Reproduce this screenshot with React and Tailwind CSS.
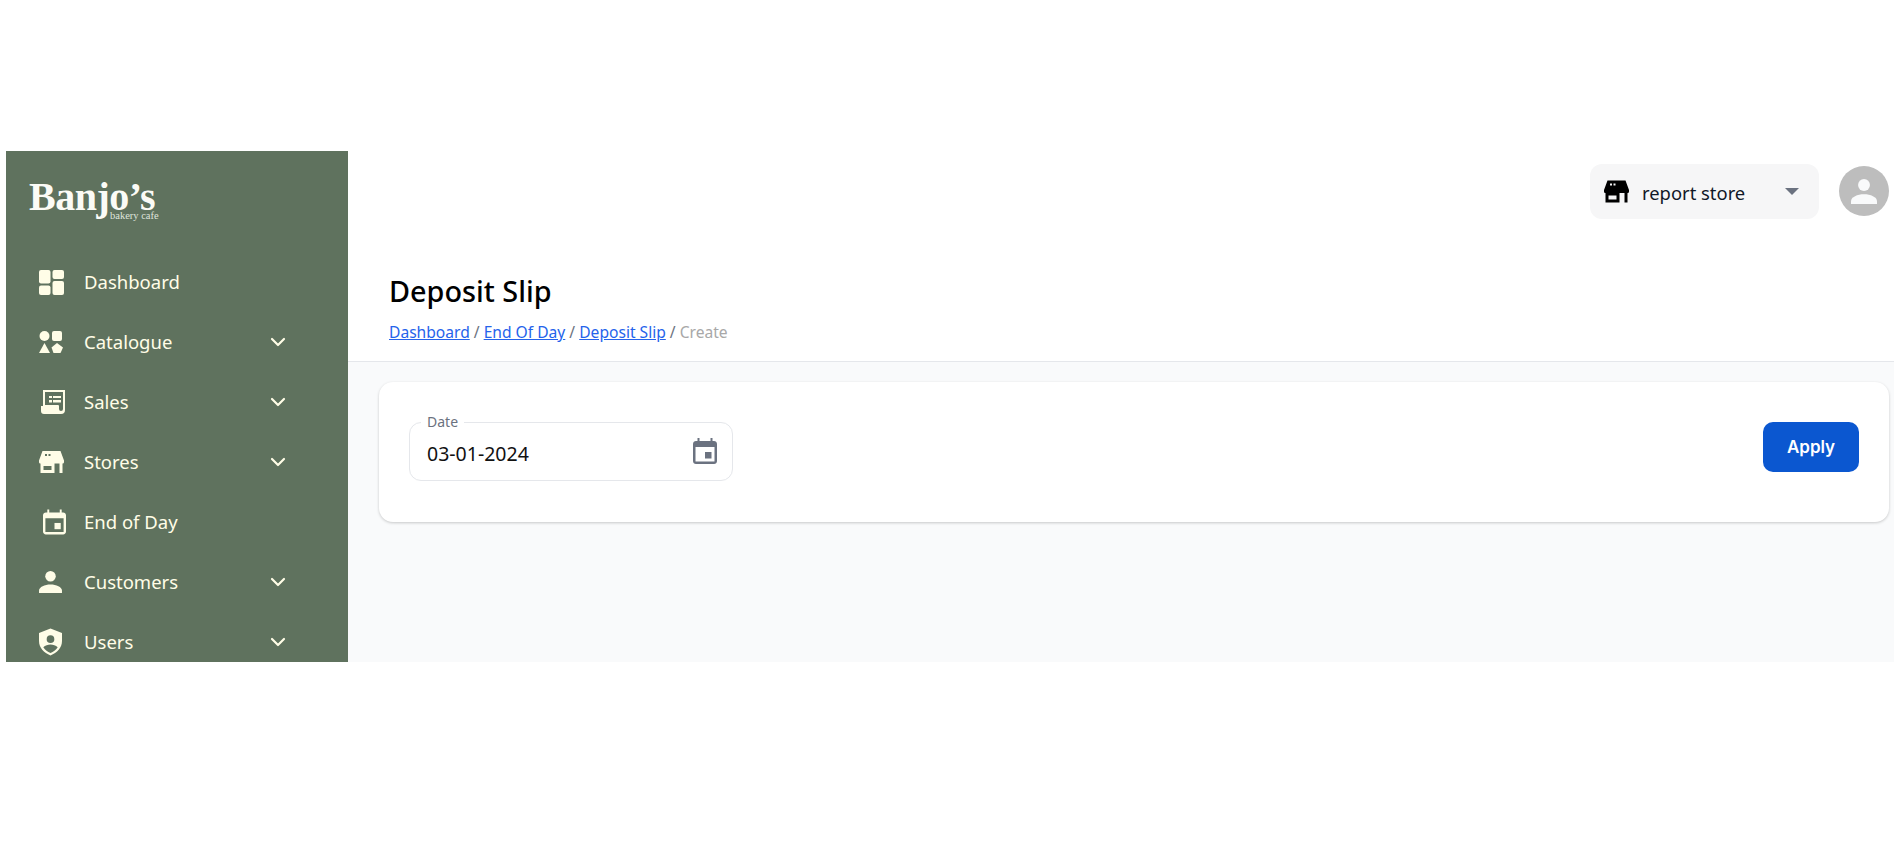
// App.jsx
import { ChevronDown } from "lucide-react";

const CREAM = "#fffde7";

const DashboardIcon = () => (
  <svg viewBox="0 0 25 25" className="w-[25px] h-[25px]" fill={CREAM}>
    <rect x="0" y="0" width="11.500" height="13.500" rx="2" />
    <rect x="13.500" y="0" width="11.500" height="9" rx="2" />
    <rect x="0" y="15.500" width="11.500" height="9.500" rx="2" />
    <rect x="13.500" y="11" width="11.500" height="14" rx="2" />
  </svg>
);

const CategoryIcon = () => (
  <svg viewBox="0 0 24 22" className="w-[24px] h-[22px]" fill={CREAM}>
    <circle cx="5.500" cy="5" r="5" />
    <rect x="13" y="0" width="10" height="10" rx="2" />
    <path d="M5.500 12 L11 22 H0 Z" />
    <path d="M18 12 L24 16.500 L21.500 22 H14.500 L12.500 16.500 Z" />
  </svg>
);

const ReceiptIcon = () => (
  <svg viewBox="0 0 24 24" className="w-[24px] h-[24px]" fill={CREAM}>
    <path
      fillRule="evenodd"
      d="M2 0H24V20a4 4 0 0 1-4 4H3a3 3 0 0 1-3-3V16H2ZM4 2V15H17a1 1 0 0 1 1 1V19a2 2 0 0 0 4 0V2Z"
    />
    <path d="M8 6h3v2H8zM12 6h8v2h-8zM8 10h3v2.500H8zM12 10h8v2.500h-8z" />
  </svg>
);

const StoreIcon = ({ color, className }) => (
  <svg viewBox="0 0 25 22" className={className} fill={color}>
    <path
      fillRule="evenodd"
      d="M3.500 0h18L25 9.500v1.500c0 1-.8 1.500-1.500 1.500V22h-3v-9.500h-5V22H1.500v-9.500C.8 12.500 0 12 0 11V9.500zM4.500 15v4h8v-4z M6 3h2v2H6z M9.500 3h2v2h-2z"
    />
  </svg>
);

const EventIcon = ({ color, className }) => (
  <svg viewBox="0 0 24 26" className={className} fill={color}>
    <path
      fillRule="evenodd"
      d="M4.500 0h2v3h11V0h2v3h1.500c1.700 0 3 1.300 3 3v17c0 1.700-1.300 3-3 3H3c-1.700 0-3-1.300-3-3V6c0-1.700 1.300-3 3-3h1.500zM2.500 9v14.500h19V9z"
    />
    <rect x="12" y="14" width="6.500" height="6.500" />
  </svg>
);

const PersonIcon = ({ color, className }) => (
  <svg viewBox="0 0 24 23" className={className} fill={color}>
    <circle cx="12" cy="5.500" r="5.500" />
    <path d="M0 23v-2.500C0 16.500 6 14 12 14s12 2.500 12 6.500V23z" />
  </svg>
);

const ShieldIcon = () => (
  <svg viewBox="0 0 24 28" className="w-[23px] h-[28px]" fill={CREAM}>
    <path
      fillRule="evenodd"
      d="M12 0 24 4.500V13c0 7-5 12.500-12 15C5 25.500 0 20 0 13V4.500zM12 7a4 4 0 1 0 0 8 4 4 0 0 0 0-8zM4.500 19.500c2 3 4.500 4.800 7.500 6 3-1.200 5.500-3 7.500-6-2-2-4.800-3-7.500-3s-5.500 1-7.500 3z"
    />
  </svg>
);

const navItems = [
  { label: "Dashboard", icon: <DashboardIcon /> },
  { label: "Catalogue", icon: <CategoryIcon />, children: true },
  { label: "Sales", icon: <span className="block ml-[2px]"><ReceiptIcon /></span>, children: true },
  { label: "Stores", icon: <StoreIcon color={CREAM} className="w-[25px] h-[22px]" />, children: true },
  {
    label: "End of Day",
    icon: <span className="block ml-[4px]"><EventIcon color={CREAM} className="w-[23px] h-[26px]" /></span>,
  },
  { label: "Customers", icon: <PersonIcon color={CREAM} className="w-[23px] h-[22px]" />, children: true },
  { label: "Users", icon: <ShieldIcon />, children: true },
];

function Sidebar() {
  return (
    <aside className="w-[342px] shrink-0 bg-[#5f725e] overflow-hidden">
      <div className="pl-[23px] pt-[23px] h-[101px] text-[#fbfbf6]">
        <div className="font-['Liberation_Serif',serif] font-bold text-[40px] leading-[46px] tracking-[-0.5px]">
          Banjo’s
        </div>
        <div className="font-['Liberation_Serif',serif] text-[10.500px] leading-[10px] ml-[81px] -mt-[9px] text-[#dfe4dc]">
          bakery cafe
        </div>
      </div>
      <nav>
        {navItems.map((item) => (
          <div key={item.label} className="flex items-center h-[60px] pl-[33px]">
            <span className="w-[25px] flex justify-start">{item.icon}</span>
            <span className="ml-[20px] text-[#fffde7] text-[18.500px] font-['Noto_Sans',sans-serif]">
              {item.label}
            </span>
            {item.children && (
              <ChevronDown className="ml-auto mr-[58px] w-[24px] h-[24px]" color={CREAM} strokeWidth={2.2} />
            )}
          </div>
        ))}
      </nav>
    </aside>
  );
}

function Header() {
  return (
    <div className="flex items-center justify-end h-[81px] pr-[5px]">
      <div className="flex items-center w-[229px] h-[55px] rounded-[12px] bg-[#f6f6f7] pl-[14px] pr-[20px]">
        <StoreIcon color="#000000" className="w-[25px] h-[23px]" />
        <span className="ml-[13px] mt-[3px] text-[18.400px] text-[#111827]">report store</span>
        <span className="ml-auto w-0 h-0 border-x-[7px] border-x-transparent border-t-[7px] border-t-[#6b7280]" />
      </div>
      <div className="ml-[20px] -mt-[1px] w-[50px] h-[50px] rounded-full bg-[#bdbdbd] flex items-center justify-center">
        <PersonIcon color="#f9fafb" className="w-[26px] h-[25px]" />
      </div>
    </div>
  );
}

export default function App() {
  return (
    <div className="h-[851px] bg-white pt-[151px] pl-[6px] font-['Noto_Sans',sans-serif]">
      <div className="flex h-[511px] overflow-hidden">
        <Sidebar />
        <main className="flex-1 flex flex-col bg-[#f9fafb]">
          <div className="bg-white border-b border-[#e5e7eb] h-[211px]">
            <Header />
            <div className="pl-[41px] pt-[39px]">
              <h1 className="text-[28.800px] leading-[40px] font-medium text-black">Deposit Slip</h1>
              <div className="mt-[10px] text-[15.600px] leading-[22px] text-[#6b7280]">
                <a className="text-[#2563eb] underline">Dashboard</a> /{" "}
                <a className="text-[#2563eb] underline">End Of Day</a> /{" "}
                <a className="text-[#2563eb] underline">Deposit Slip</a> /{" "}
                <span className="text-[#a8a8a8]">Create</span>
              </div>
            </div>
          </div>
          <div className="pt-[20px] pl-[31px] pr-[5px]">
            <div className="h-[140px] bg-white rounded-[14px] shadow-[0_1px_3px_rgba(0,0,0,0.2)] flex items-start justify-between pt-[40px] pl-[30px] pr-[30px]">
              <div className="relative w-[324px] h-[59px] border border-[#e5e7eb] rounded-[12px] flex items-center justify-between pl-[17px] pr-[15px]">
                <span className="absolute -top-[10px] left-[11px] bg-white px-[6px] text-[14px] leading-[18px] text-[#6b7280]">
                  Date
                </span>
                <span className="text-[19.500px] text-[#111111] mt-[5px]">03-01-2024</span>
                <EventIcon color="#6b7280" className="w-[24px] h-[26px] -mt-[1px]" />
              </div>
              <button className="w-[96px] h-[50px] pt-[2px] rounded-[10px] bg-[#0b57d0] text-white text-[17px] font-semibold font-['Inter',sans-serif]">
                Apply
              </button>
            </div>
          </div>
        </main>
      </div>
    </div>
  );
}
